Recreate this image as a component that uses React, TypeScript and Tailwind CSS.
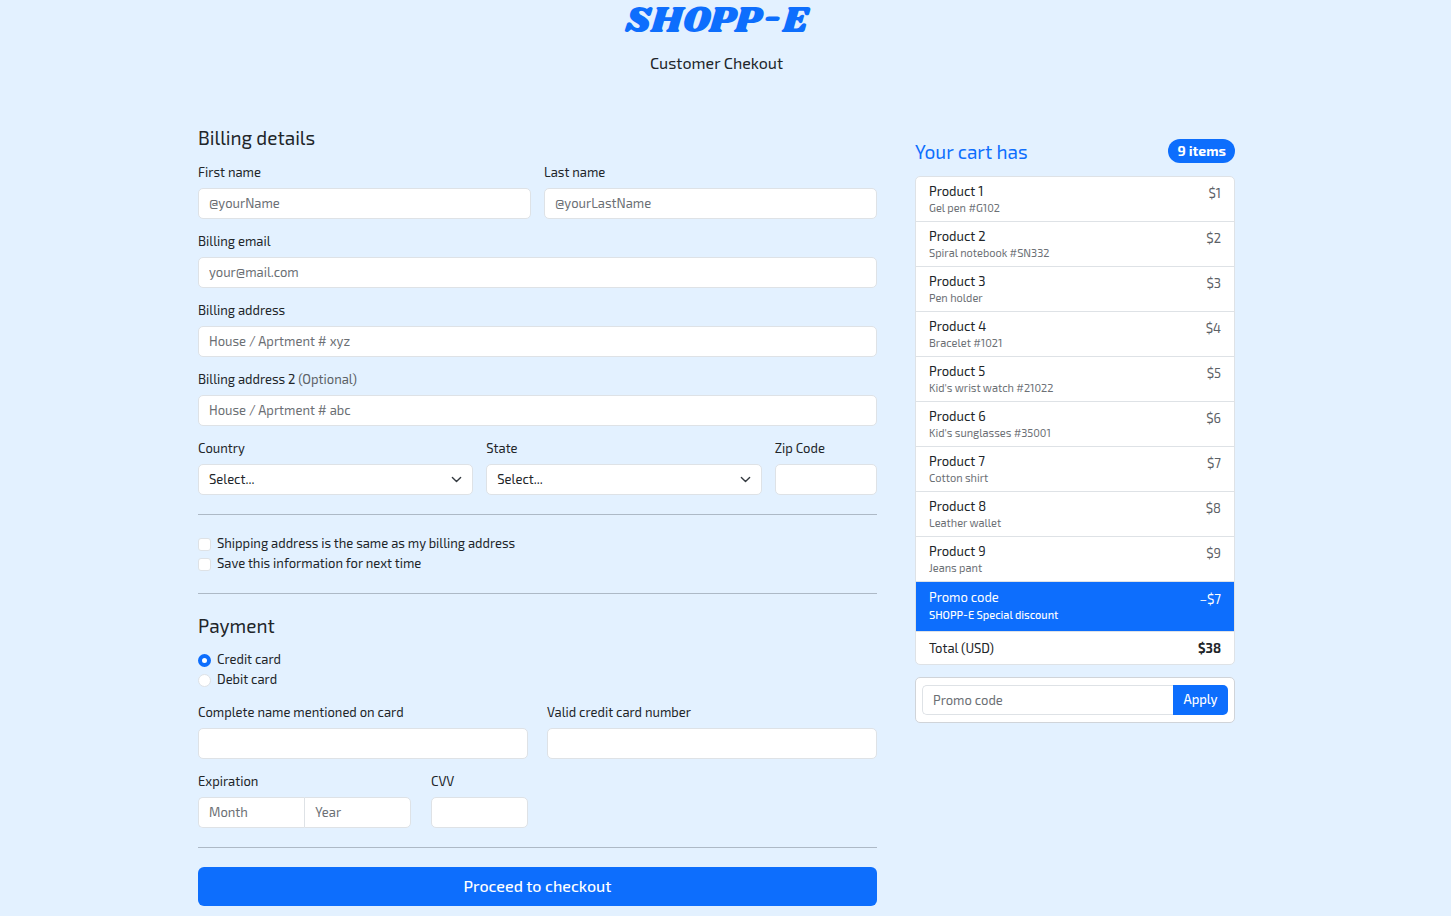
import { useState, type InputHTMLAttributes, type ReactNode } from 'react';

const control =
  'h-[31px] w-full min-w-0 border border-[#dee2e6] bg-white px-2.5 text-[13px] text-[#212529] placeholder:text-[#6b6f74] focus:outline-none focus:border-[#86b7fe]';

const products = [
  { name: 'Product 1', detail: 'Gel pen #G102', price: '$1' },
  { name: 'Product 2', detail: 'Spiral notebook #SN332', price: '$2' },
  { name: 'Product 3', detail: 'Pen holder', price: '$3' },
  { name: 'Product 4', detail: 'Bracelet #1021', price: '$4' },
  { name: 'Product 5', detail: "Kid's wrist watch #21022", price: '$5' },
  { name: 'Product 6', detail: "Kid's sunglasses #35001", price: '$6' },
  { name: 'Product 7', detail: 'Cotton shirt', price: '$7' },
  { name: 'Product 8', detail: 'Leather wallet', price: '$8' },
  { name: 'Product 9', detail: 'Jeans pant', price: '$9' },
];

function Label({ id, children }: { id: string; children: ReactNode }) {
  return (
    <label htmlFor={id} className="mb-1.5 block leading-5">
      {children}
    </label>
  );
}

function Field({
  id,
  label,
  className = '',
  ...rest
}: { id: string; label: ReactNode; className?: string } & InputHTMLAttributes<HTMLInputElement>) {
  return (
    <div className={className}>
      <Label id={id}>{label}</Label>
      <input id={id} className={`${control} rounded-[5px] pb-0.5`} {...rest} />
    </div>
  );
}

function SelectField({ id, label, options }: { id: string; label: string; options: string[] }) {
  return (
    <div className="col-span-5">
      <Label id={id}>{label}</Label>
      <div className="relative">
        <select id={id} className={`${control} appearance-none rounded-[5px]`}>
          <option>Select...</option>
          {options.map((o) => (
            <option key={o}>{o}</option>
          ))}
        </select>
        <svg
          viewBox="0 0 16 16"
          className="pointer-events-none absolute inset-y-0 right-[11px] my-auto size-[11px]"
          fill="none"
          stroke="#343a40"
          strokeWidth="2"
          strokeLinecap="round"
          strokeLinejoin="round"
          aria-hidden="true"
        >
          <path d="m2 5 6 6 6-6" />
        </svg>
      </div>
    </div>
  );
}

function Check({ id, label }: { id: string; label: string }) {
  return (
    <div className="flex h-5 items-center gap-1.5">
      <input
        type="checkbox"
        id={id}
        className="size-[13px] appearance-none rounded-[3px] border border-[#dee2e6] bg-white checked:border-[#0d6efd] checked:bg-[#0d6efd]"
      />
      <label htmlFor={id}>{label}</label>
    </div>
  );
}

function CardOption({
  id,
  label,
  checked,
  onSelect,
}: {
  id: string;
  label: string;
  checked: boolean;
  onSelect: () => void;
}) {
  return (
    <div className="flex h-5 items-center gap-1.5">
      <input
        type="radio"
        name="card"
        id={id}
        checked={checked}
        onChange={onSelect}
        className="size-[13px] appearance-none rounded-full border border-[#dee2e6] bg-white checked:border-4 checked:border-[#0d6efd]"
      />
      <label htmlFor={id}>{label}</label>
    </div>
  );
}

function Divider() {
  return <hr className="my-[19px] border-[#adb9c6]" />;
}

function Cart() {
  return (
    <aside className="w-80 shrink-0 pt-3.5">
      <div className="mb-[11px] flex h-[26px] items-start justify-between">
        <h2 className="text-[19px] leading-[26px] text-[#0d6efd]">Your cart has</h2>
        <span className="rounded-full bg-[#0d6efd] px-[9px] text-[14px] leading-6 font-bold text-white">
          9 items
        </span>
      </div>
      <ul className="overflow-hidden rounded-[5px] border border-[#dee2e6] bg-white">
        {products.map((p) => (
          <li
            key={p.name}
            className="flex justify-between border-b border-[#dee2e6] px-[13px] pt-[5px] pb-1.5"
          >
            <div>
              <h3 className="leading-[19px]">{p.name}</h3>
              <p className="text-[11px] leading-[14px] text-[#6c7075]">{p.detail}</p>
            </div>
            <span className="leading-[22px] text-[#5c6166]">{p.price}</span>
          </li>
        ))}
        <li className="flex justify-between bg-[#0d6efd] px-[13px] pt-1.5 pb-[9px] text-white">
          <div>
            <h3 className="leading-[19px]">Promo code</h3>
            <p className="text-[11px] leading-[15px] font-medium">SHOPP-E Special discount</p>
          </div>
          <span className="leading-[22px]">−$7</span>
        </li>
        <li className="flex justify-between border-t border-[#dee2e6] px-[13px] py-1.5 leading-5">
          <span>Total (USD)</span>
          <strong>$38</strong>
        </li>
      </ul>
      <form
        className="mt-3 flex rounded-[5px] border border-[#d0d4d9] bg-white px-1.5 py-[7px]"
        onSubmit={(e) => e.preventDefault()}
      >
        <input
          aria-label="Promo code"
          placeholder="Promo code"
          className="h-[30px] min-w-0 flex-1 rounded-l-[5px] border border-r-0 border-[#dee2e6] bg-white px-2.5 text-[13px] placeholder:text-[#6b6f74] focus:outline-none"
        />
        <button
          type="submit"
          className="w-[55px] rounded-r-[5px] bg-[#0d6efd] text-[13px] font-medium text-white"
        >
          Apply
        </button>
      </form>
    </aside>
  );
}

export default function App() {
  const [card, setCard] = useState('credit');
  return (
    <div className="min-h-screen bg-[#e3f1ff] pr-[18px] pb-2.5 font-['Exo_2','Roboto',sans-serif] text-[13px] text-[#212529]">
      <header className="text-center">
        <h1 className="font-['Shrikhand','DejaVu_Serif',serif] text-[38px] leading-[42px] text-[#0d6efd]">
          SHOPP-E
        </h1>
        <p className="mt-[9px] text-[16px] leading-6">Customer Chekout</p>
      </header>
      <main className="mx-auto mt-[50px] flex max-w-[1037px] items-start gap-[38px]">
        <form className="min-w-0 flex-1" onSubmit={(e) => e.preventDefault()}>
          <h2 className="mb-[11px] text-[19px] leading-[26px]">Billing details</h2>
          <div className="grid grid-cols-12 gap-x-[13px] gap-y-3">
            <Field id="first" label="First name" placeholder="@yourName" className="col-span-6" />
            <Field id="last" label="Last name" placeholder="@yourLastName" className="col-span-6" />
            <Field
              id="email"
              type="email"
              label="Billing email"
              placeholder="your@mail.com"
              className="col-span-12"
            />
            <Field
              id="address"
              label="Billing address"
              placeholder="House / Aprtment # xyz"
              className="col-span-12"
            />
            <Field
              id="address2"
              label={
                <>
                  Billing address 2 <span className="text-[#5c6166]">(Optional)</span>
                </>
              }
              placeholder="House / Aprtment # abc"
              className="col-span-12"
            />
            <SelectField id="country" label="Country" options={['Canada', 'United States']} />
            <SelectField id="state" label="State" options={['Ontario', 'New York']} />
            <Field id="zip" label="Zip Code" className="col-span-2" />
          </div>
          <Divider />
          <Check id="same" label="Shipping address is the same as my billing address" />
          <Check id="save" label="Save this information for next time" />
          <Divider />
          <h2 className="mb-[11px] text-[19px] leading-[26px]">Payment</h2>
          <CardOption
            id="credit"
            label="Credit card"
            checked={card === 'credit'}
            onSelect={() => setCard('credit')}
          />
          <CardOption
            id="debit"
            label="Debit card"
            checked={card === 'debit'}
            onSelect={() => setCard('debit')}
          />
          <div className="mt-3 grid grid-cols-2 gap-x-[19px] gap-y-3">
            <Field id="holder" label="Complete name mentioned on card" />
            <Field id="number" label="Valid credit card number" />
            <div className="flex gap-5">
              <div className="min-w-0 flex-1">
                <Label id="month">Expiration</Label>
                <div className="flex">
                  <input
                    id="month"
                    placeholder="Month"
                    className={`${control} rounded-l-[5px] border-r-0 pb-0.5`}
                  />
                  <input
                    aria-label="Expiration year"
                    placeholder="Year"
                    className={`${control} rounded-r-[5px] pb-0.5`}
                  />
                </div>
              </div>
              <Field id="cvv" label="CVV" className="w-[97px]" />
            </div>
          </div>
          <Divider />
          <button
            type="submit"
            className="h-[39px] w-full rounded-[6px] bg-[#0d6efd] pb-0.5 text-[16px] font-medium text-white"
          >
            Proceed to checkout
          </button>
        </form>
        <Cart />
      </main>
    </div>
  );
}
